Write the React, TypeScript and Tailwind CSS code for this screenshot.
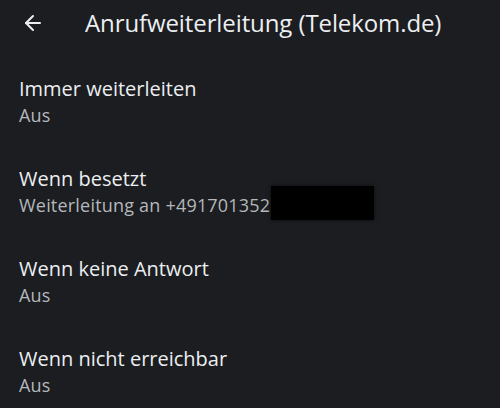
import { ArrowLeft } from "lucide-react";

const rows = [
  { title: "Immer weiterleiten", sub: "Aus" },
  { title: "Wenn besetzt", sub: "Weiterleitung an +491701352", redacted: true },
  { title: "Wenn keine Antwort", sub: "Aus" },
  { title: "Wenn nicht erreichbar", sub: "Aus" },
];

export default function App() {
  return (
    <div
      className="w-[500px] h-[408px] overflow-hidden bg-[#1b1d20] text-[#eceef1]"
      style={{ fontFamily: '"Open Sans", sans-serif' }}
    >
      {/* top bar */}
      <div className="flex items-center h-[46px] pl-[21px]">
        <ArrowLeft className="w-[24px] h-[24px] text-[#eceef1]" strokeWidth={2} />
        <h1 className="ml-[40px] text-[24px] leading-none tracking-[-0.1px]">Anrufweiterleitung (Telekom.de)</h1>
      </div>

      {/* rows */}
      <div className="flex flex-col pt-[30px]">
        {rows.map((r) => (
          <div key={r.title} className="h-[90px] px-[19px]">
            <div className="text-[20px] leading-[26px]">{r.title}</div>
            <div className="flex items-center h-[26px] text-[18px] leading-[26px] tracking-[0.2px] text-[#b4b7bc]">
              <span>{r.sub}</span>
              {r.redacted && (
                <span className="ml-[1px] mb-[4px] w-[103px] h-[34px] shrink-0 bg-black shadow-[0_0_4px_rgba(0,0,0,0.6)]" />
              )}
            </div>
          </div>
        ))}
      </div>
    </div>
  );
}
